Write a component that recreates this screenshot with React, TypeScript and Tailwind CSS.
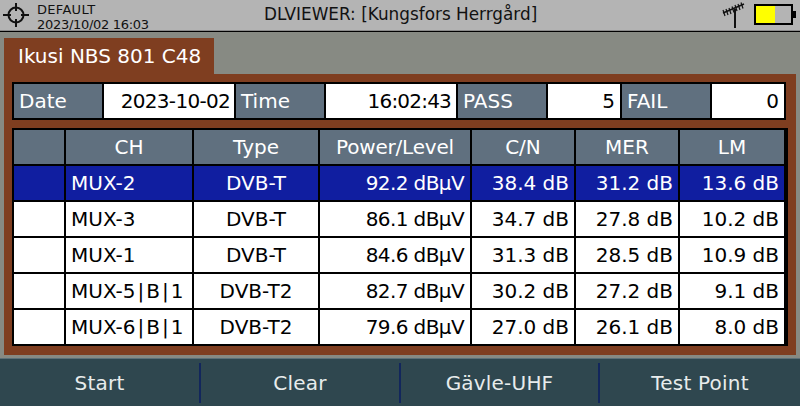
import React from "react";

const ROWS = [
  ["MUX-2", "DVB-T", "92.2 dBµV", "38.4 dB", "31.2 dB", "13.6 dB"],
  ["MUX-3", "DVB-T", "86.1 dBµV", "34.7 dB", "27.8 dB", "10.2 dB"],
  ["MUX-1", "DVB-T", "84.6 dBµV", "31.3 dB", "28.5 dB", "10.9 dB"],
  ["MUX-5|B|1", "DVB-T2", "82.7 dBµV", "30.2 dB", "27.2 dB", "9.1 dB"],
  ["MUX-6|B|1", "DVB-T2", "79.6 dBµV", "27.0 dB", "26.1 dB", "8.0 dB"],
];

const HEAD = ["", "CH", "Type", "Power/Level", "C/N", "MER", "LM"];
const KEYS = ["Start", "Clear", "Gävle-UHF", "Test Point"];

const Label = ({ text, w }: { text: string; w: string }) => (
  <div className={`${w} bg-[#60707f] text-white pl-[5px] flex items-center`}>{text}</div>
);

const Value = ({ text, w, cls }: { text: string; w: string; cls?: string }) => (
  <div className={`${w} ${cls ?? "pr-[5px]"} bg-white text-black flex items-center justify-end`}>{text}</div>
);

export default function App() {
  return (
    <div className="w-[800px] h-[406px] flex flex-col overflow-hidden bg-[#878a83] font-['DejaVu_Sans',sans-serif] text-[20px]">
      {/* Status bar */}
      <div className="h-[30px] bg-[#b4b4b4] flex items-center shrink-0">
        <svg width="28" height="28" viewBox="0 0 28 28" className="ml-[2px] shrink-0" fill="none" stroke="#111" strokeWidth="2">
          <circle cx="14" cy="14" r="7.5" />
          <path d="M14 2v8M14 18v8M1 14h8M19 14h8" />
        </svg>
        <div className="ml-[7px] mt-[3px] text-[13px] leading-[15px] text-[#111] w-[200px]">
          <div className="tracking-[0.3px]">DEFAULT</div>
          <div className="tracking-[-0.3px]">2023/10/02 16:03</div>
        </div>
        <div className="ml-[27px] text-[16.85px] text-[#111]">DLVIEWER: [Kungsfors Herrgård]</div>
        <div className="ml-auto mr-[4px] flex items-center">
          <svg width="24" height="30" viewBox="0 0 24 30" fill="none" stroke="#111">
            <path d="M14 9v19" strokeWidth="2" />
            <path d="M2 13 23 4" strokeWidth="1.5" />
            <path d="M2 10l2 6M5 9l2 6M8 8l2 6M11 6.500l2 6M14 5l2 6M17 4l2 6M20 2.500l2 6" strokeWidth="1.2" />
          </svg>
          <div className="ml-[9px] w-[39px] h-[21px] -mt-px border-2 border-black flex">
            <div className="w-[19px] bg-[#ffff00]" />
          </div>
          <div className="w-[3px] h-[7px] -mt-px bg-black" />
        </div>
      </div>
      <div className="h-px bg-[#8a8a8a] shrink-0" />
      <div className="h-px bg-black shrink-0" />

      {/* Main area */}
      <div className="flex-1 px-[4px] pt-[6px] flex flex-col">
        <div className="w-[210px] h-[36px] bg-[#7f3e20] text-white pl-[14px] flex items-center shrink-0">Ikusi NBS 801 C48</div>
        <div className="w-[792px] h-[281px] bg-[#7f3e20] px-[8px] pt-[8px] shrink-0">
          <div className="w-[774px] h-[38px] bg-black p-[2px] flex gap-[2px]">
            <Label text="Date" w="w-[88px]" />
            <Value text="2023-10-02" w="w-[130px]" cls="pr-[4px] tracking-[-0.7px]" />
            <Label text="Time" w="w-[88px]" />
            <Value text="16:02:43" w="w-[130px]" cls="pr-[5px] tracking-[-0.8px]" />
            <Label text="PASS" w="w-[88px]" />
            <Value text="5" w="w-[72px]" />
            <Label text="FAIL" w="w-[88px]" />
            <Value text="0" w="w-[72px]" />
          </div>
          <div className="mt-[8px] w-[776px] bg-black pl-[2px] pr-[4px] py-[2px] grid grid-cols-[50px_126px_124px_150px_102px_102px_104px] gap-[2px] grid-rows-[repeat(6,34px)]">
            {HEAD.map((h, i) => (
              <div key={i} className={`bg-[#60707f] text-white flex items-center justify-center ${i === 3 ? "tracking-[-0.2px]" : ""}`}>{h}</div>
            ))}
            {ROWS.map((row, r) => {
              const rowCls = r === 0 ? "bg-[#101ea0] text-white" : "bg-white text-black";
              return (
                <React.Fragment key={r}>
                  <div className={rowCls} />
                  <div className={`${rowCls} flex items-center pl-[5px] gap-[2px]`}>
                    {/* pipes sit wider apart on the device font */}
                    {row[0].split("|").map((p, i) => (
                      <React.Fragment key={i}>
                        {i > 0 && <span>|</span>}
                        <span>{p}</span>
                      </React.Fragment>
                    ))}
                  </div>
                  <div className={`${rowCls} flex items-center justify-center`}>{row[1]}</div>
                  <div className={`${rowCls} flex items-center justify-end pr-[6px] tracking-[-0.6px]`}>{row[2]}</div>
                  {row.slice(3).map((v, i) => (
                    <div key={i} className={`${rowCls} flex items-center justify-end pr-[5px]`}>{v}</div>
                  ))}
                </React.Fragment>
              );
            })}
          </div>
        </div>
      </div>

      {/* Softkeys */}
      <div className="h-[48px] shrink-0 bg-[#2f474f] border-t border-[#5c7078] grid grid-cols-[199px_200px_199px_1fr] items-center tracking-[0.2px]">
        {KEYS.map((k, i) => (
          <div key={k} className={`h-[40px] flex items-center justify-center text-[#e8ecec] ${i > 0 ? "border-l-2 border-[#12265c]" : ""}`}>{k}</div>
        ))}
      </div>
    </div>
  );
}
